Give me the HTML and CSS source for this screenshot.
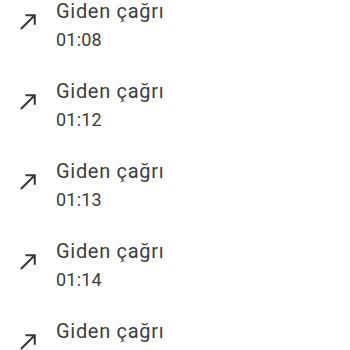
FILE: index.html
```html
<!DOCTYPE html>
<html lang="tr">
<head>
<meta charset="utf-8">
<link rel="stylesheet" href="styles.css">
</head>
<body>
<div class="list">
  <div class="row">
    <svg class="icon" viewBox="0 0 24 24"><path d="M9 5v2h6.59L4 18.59 5.41 20 17 8.41V15h2V5z"/></svg>
    <div class="text"><div class="title">Giden çağrı</div><div class="time">01:08</div></div>
  </div>
  <div class="row">
    <svg class="icon" viewBox="0 0 24 24"><path d="M9 5v2h6.59L4 18.59 5.41 20 17 8.41V15h2V5z"/></svg>
    <div class="text"><div class="title">Giden çağrı</div><div class="time">01:12</div></div>
  </div>
  <div class="row">
    <svg class="icon" viewBox="0 0 24 24"><path d="M9 5v2h6.59L4 18.59 5.41 20 17 8.41V15h2V5z"/></svg>
    <div class="text"><div class="title">Giden çağrı</div><div class="time">01:13</div></div>
  </div>
  <div class="row">
    <svg class="icon" viewBox="0 0 24 24"><path d="M9 5v2h6.59L4 18.59 5.41 20 17 8.41V15h2V5z"/></svg>
    <div class="text"><div class="title">Giden çağrı</div><div class="time">01:14</div></div>
  </div>
  <div class="row">
    <svg class="icon" viewBox="0 0 24 24"><path d="M9 5v2h6.59L4 18.59 5.41 20 17 8.41V15h2V5z"/></svg>
    <div class="text"><div class="title">Giden çağrı</div></div>
  </div>
</div>
</body>
</html>
```
FILE: styles.css
```css
html, body {
  margin: 0;
  padding: 0;
  background: #ffffff;
  overflow: hidden;
  height: 350px;
}
body {
  font-family: Roboto, "Noto Sans", sans-serif;
  color: #3c3c3c;
}
.list {
  margin-top: -15px;
}
.row {
  display: flex;
  align-items: flex-start;
  height: 80px;
  box-sizing: border-box;
  padding: 12px 0 10px 16px;
}
.icon {
  width: 25px;
  height: 25px;
  margin-top: 12px;
  margin-right: 15px;
  fill: #383838;
  flex: none;
}
.title {
  font-size: 20px;
  line-height: 28px;
  letter-spacing: 0.7px;
}
.time {
  font-size: 18px;
  line-height: 30px;
  letter-spacing: 0.2px;
}
```
